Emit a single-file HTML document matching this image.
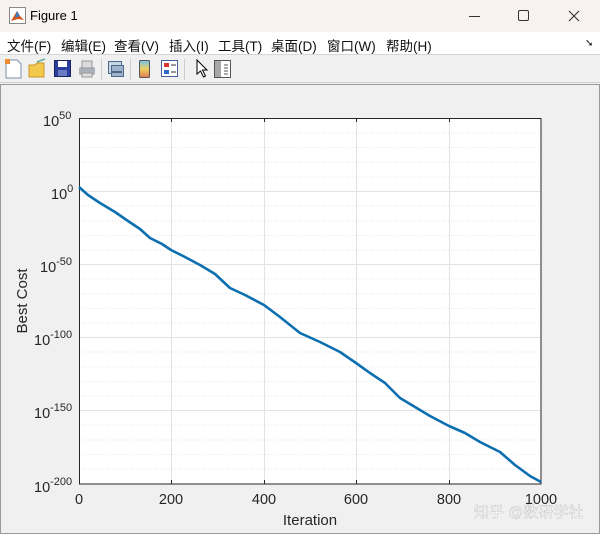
<!DOCTYPE html>
<html><head><meta charset="utf-8"><style>
*{margin:0;padding:0;box-sizing:border-box}
body{width:600px;height:534px;overflow:hidden;background:#f0f0f0;font-family:"Liberation Sans","Noto Sans CJK SC",sans-serif;position:relative}
.title{position:absolute;left:0;top:0;width:600px;height:32px;background:#f7f2ef}
.title .t{position:absolute;left:30px;top:8px;font-size:13px;color:#000}
.menu{position:absolute;left:0;top:32px;width:600px;height:23px;background:#fff;border-bottom:1px solid #d6d6d6;font-size:13.5px}
.menu span{position:absolute;top:3px;color:#111}
.tool{position:absolute;left:0;top:56px;width:600px;height:27px;background:#f0f0f0;border-bottom:1px solid #d0d0d0}
.sep{position:absolute;top:3px;width:1px;height:21px;background:#ccc}
</style></head><body>
<div class="title">
<svg style="position:absolute;left:9px;top:7px" width="17" height="17"><rect x="0.5" y="0.5" width="16" height="16" fill="#fff" stroke="#888"/><path d="M2 14 L8 4 L11 9 L15 13 L9 12 Z" fill="#d9551b"/><path d="M8 4 L11 9 L6 11 Z" fill="#3b7bbf"/></svg>
<span class="t">Figure 1</span>
<div style="position:absolute;left:469px;top:16px;width:11px;height:1px;background:#333"></div>
<div style="position:absolute;left:518px;top:10px;width:11px;height:11px;border:1px solid #333;border-radius:2px"></div>
<svg style="position:absolute;left:568px;top:10px" width="12" height="12"><path d="M1 1L11 11M11 1L1 11" stroke="#333" stroke-width="1.1"/></svg>
</div>
<div class="menu">
<span style="left:7px">文件(F)</span><span style="left:61px">编辑(E)</span><span style="left:114px">查看(V)</span><span style="left:169px">插入(I)</span><span style="left:218px">工具(T)</span><span style="left:271px">桌面(D)</span><span style="left:327px">窗口(W)</span><span style="left:386px">帮助(H)</span>
<span style="left:585px;font-size:10px;top:6px">➘</span>
</div>
<div class="tool">
<svg style="position:absolute;left:0;top:0" width="240" height="27">
<path d="M6 4 H17 L21 8 V22 H6 Z" fill="#fff" stroke="#7a8fa8"/><rect x="5" y="3" width="5" height="5" fill="#f08a30"/>
<path d="M29 9 H35 L37 7 H44 V21 H29 Z" fill="#f2c94c" stroke="#c9972a"/><path d="M37 6 L45 3" stroke="#6a9" stroke-width="1.5"/>
<rect x="54.5" y="4.5" width="16" height="16" fill="#2c3e9c" stroke="#1a2360"/><rect x="58" y="5" width="9" height="6" fill="#fff"/><rect x="58" y="14" width="9" height="6" fill="#6a7bc4"/>
<rect x="79" y="11" width="16" height="8" rx="2" fill="#aab0b8"/><rect x="82" y="5" width="10" height="7" fill="#d8dce0" stroke="#999"/><rect x="82" y="17" width="10" height="4" fill="#ddd" stroke="#999"/>
<rect x="108.5" y="5.5" width="13" height="12" fill="#c9d6e4" stroke="#4d6a8c"/><rect x="111.5" y="9.5" width="12" height="11" fill="#9fb3ca" stroke="#4d6a8c"/><path d="M112 16 h10" stroke="#2f4c70" stroke-width="1.5"/>
<rect x="139.5" y="4.5" width="10" height="17" rx="1" fill="url(#cg)" stroke="#555"/>
<defs><linearGradient id="cg" x1="0" y1="0" x2="0" y2="1"><stop offset="0" stop-color="#6fc3f0"/><stop offset=".5" stop-color="#f0d060"/><stop offset="1" stop-color="#e07a50"/></linearGradient></defs>
<rect x="161.5" y="4.5" width="16" height="16" fill="#fff" stroke="#4a5fa0"/><rect x="164" y="7" width="5" height="4" fill="#d33"/><rect x="164" y="14" width="5" height="4" fill="#36c"/><path d="M171 9 h5 M171 16 h5" stroke="#333"/>
<path d="M197 4 L197 18 L200.5 15 L203.5 21 L205.5 20 L202.5 14 L207 14 Z" fill="#fff" stroke="#000"/>
<rect x="214.5" y="4.5" width="16" height="17" fill="#fff" stroke="#555"/><rect x="215" y="5" width="6" height="16" fill="#a8a8a8"/><path d="M224 9h4M224 12h4M224 15h4M224 18h4" stroke="#555"/>
</svg>
<div class="sep" style="left:101px"></div>
<div class="sep" style="left:130px"></div>
<div class="sep" style="left:184px"></div>
</div>
<svg style="position:absolute;left:0;top:0" width="600" height="534">
<rect x="0.5" y="84.5" width="599" height="449" fill="none" stroke="#9a9a9a" stroke-width="1"/>
<rect x="79" y="118" width="462" height="366" fill="#fff"/>
<g stroke="#e3e3e3" stroke-width="1">
<line x1="171.5" y1="118" x2="171.5" y2="484"/><line x1="264.5" y1="118" x2="264.5" y2="484"/><line x1="356.5" y1="118" x2="356.5" y2="484"/><line x1="449.5" y1="118" x2="449.5" y2="484"/>
<line x1="79" y1="191.5" x2="541" y2="191.5"/><line x1="79" y1="264.5" x2="541" y2="264.5"/><line x1="79" y1="337.5" x2="541" y2="337.5"/><line x1="79" y1="410.5" x2="541" y2="410.5"/>
</g>
<g stroke="#e6e6e6" stroke-width="1" stroke-dasharray="1,2">
<line x1="79" y1="133" x2="541" y2="133"/><line x1="79" y1="147.5" x2="541" y2="147.5"/><line x1="79" y1="162" x2="541" y2="162"/><line x1="79" y1="177" x2="541" y2="177"/>
<line x1="79" y1="206" x2="541" y2="206"/><line x1="79" y1="221" x2="541" y2="221"/><line x1="79" y1="235.5" x2="541" y2="235.5"/><line x1="79" y1="250" x2="541" y2="250"/>
<line x1="79" y1="279" x2="541" y2="279"/><line x1="79" y1="294" x2="541" y2="294"/><line x1="79" y1="308.5" x2="541" y2="308.5"/><line x1="79" y1="323" x2="541" y2="323"/>
<line x1="79" y1="352" x2="541" y2="352"/><line x1="79" y1="367" x2="541" y2="367"/><line x1="79" y1="381.5" x2="541" y2="381.5"/><line x1="79" y1="396" x2="541" y2="396"/>
<line x1="79" y1="425" x2="541" y2="425"/><line x1="79" y1="440" x2="541" y2="440"/><line x1="79" y1="454.5" x2="541" y2="454.5"/><line x1="79" y1="469" x2="541" y2="469"/>
</g>
<rect x="79.5" y="118.5" width="461.5" height="365.5" fill="none" stroke="#262626" stroke-width="1"/>
<g stroke="#262626" stroke-width="1">
<line x1="171.5" y1="484" x2="171.5" y2="480"/><line x1="264.5" y1="484" x2="264.5" y2="480"/><line x1="356.5" y1="484" x2="356.5" y2="480"/><line x1="449.5" y1="484" x2="449.5" y2="480"/>
<line x1="171.5" y1="118" x2="171.5" y2="122"/><line x1="264.5" y1="118" x2="264.5" y2="122"/><line x1="356.5" y1="118" x2="356.5" y2="122"/><line x1="449.5" y1="118" x2="449.5" y2="122"/>
</g>
<polyline fill="none" stroke="#0b6fb0" stroke-width="2.6" stroke-linejoin="round" points="79,187 88,195 100,203 115,212 128,221 140,229 150,238 162,244 171,250 185,257 200,265 215,274 230,288 245,295 264,305 280,317 300,333 320,342 340,352 356,363 370,373 385,383 400,398 415,407 430,416 449,426 465,433 480,442 500,452 515,465 530,476 541,482"/>
<g font-family="Liberation Sans,sans-serif" font-size="14.5" fill="#262626">
<text x="79" y="504" text-anchor="middle">0</text><text x="171" y="504" text-anchor="middle">200</text><text x="264" y="504" text-anchor="middle">400</text><text x="356" y="504" text-anchor="middle">600</text><text x="449" y="504" text-anchor="middle">800</text><text x="541" y="504" text-anchor="middle">1000</text>
<text x="310" y="525" text-anchor="middle" font-size="15">Iteration</text>
<text transform="translate(27,301) rotate(-90)" text-anchor="middle" font-size="15">Best Cost</text>
<text x="43" y="126">10<tspan font-size="11" dy="-7">50</tspan></text>
<text x="51" y="199">10<tspan font-size="11" dy="-7">0</tspan></text>
<text x="40" y="272">10<tspan font-size="11" dy="-7">-50</tspan></text>
<text x="34" y="345">10<tspan font-size="11" dy="-7">-100</tspan></text>
<text x="34" y="418">10<tspan font-size="11" dy="-7">-150</tspan></text>
<text x="34" y="492">10<tspan font-size="11" dy="-7">-200</tspan></text>
</g>
<text x="474" y="517" font-family="Liberation Sans,Noto Sans CJK SC,sans-serif" font-size="15" fill="#fff" stroke="#aaa" stroke-width="0.3" opacity="0.95">知乎 @数研学社</text>
</svg>
</body></html>
